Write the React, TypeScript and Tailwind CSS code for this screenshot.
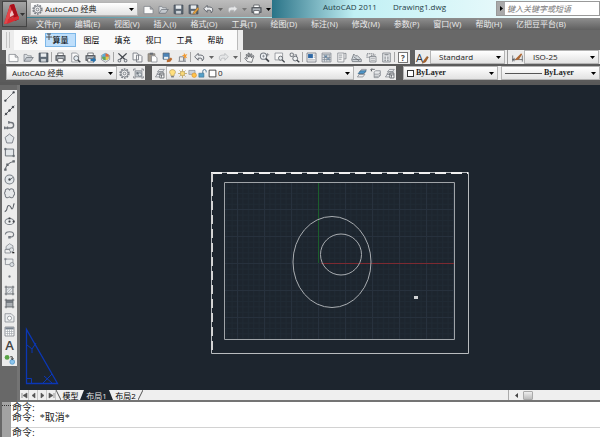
import { useState } from 'react';
import type { ReactNode } from 'react';

const dark = '#43474d';
const mid = '#777c83';

const page = <path d="M1.500 3.500h9l4 4v6.500h-13z M10.500 3.500v4h4" fill="#fbfbfb" stroke={mid} />;
const folder = (
  <>
    <path d="M1.500 13.500v-10h4l1.500 2h5v2.500" fill="#d9dde1" stroke={mid} />
    <path d="M1.500 13.500l3.500-5.500h10l-4 5.500z" fill="#c3c8ce" stroke="#646a72" />
  </>
);
const disk = (
  <>
    <path d="M1.500 1.500h13v13h-12l-1-1z" fill="#5d6874" stroke="#414a54" />
    <path d="M4 2h8v5h-8z" fill="#e8ecef" />
    <path d="M4.500 10h7v4h-7z" fill="#cdd2d7" />
  </>
);
const printer = (
  <>
    <path d="M4 1.500h8v4h-8z" fill="#fff" stroke={dark} />
    <path d="M1.500 5.500h13v6.500h-13z" fill="#aeb3b9" stroke={dark} strokeWidth="1.500" />
    <path d="M4 9.500h8v5h-8z" fill="#fff" stroke={dark} />
  </>
);
const magnifier = (
  <>
    <circle cx="6.500" cy="6" r="4.500" fill="#eef1f4" stroke="#747a82" strokeWidth="1.500" />
    <path d="M10 9.500l4.500 4.500" stroke={dark} strokeWidth="2.500" />
  </>
);
const gear = (
  <>
    <circle cx="8" cy="8" r="6.500" fill="none" stroke={mid} strokeWidth="2" strokeDasharray="2.600 1.500" />
    <circle cx="8" cy="8" r="5" fill="#f1f1f1" stroke={mid} strokeWidth="1.300" />
    <circle cx="8" cy="8" r="2" fill="none" stroke={mid} strokeWidth="1.300" />
  </>
);
const layers = (
  <>
    <path d="M5 5.500l3-3.500h7l-3 3.500z M4 9l3-3.500h7l-3 3.500z M2 13l3-4h8l-3 4z" fill="#e9ebee" stroke={mid} />
  </>
);

const icons: Record<string, ReactNode> = {
  page,
  folder,
  disk,
  printer,
  gear,
  saveAs: (
    <>
      {disk}
      <path d="M8 12l6-7 2 2-6 7-3 1z" fill="#e6a13f" stroke="#8b6630" strokeWidth=".7" />
    </>
  ),
  preview: (
    <>
      <path d="M2.500 1.500h7l3 3v10h-10z" fill="#fafafa" stroke={mid} />
      <circle cx="9" cy="9" r="3.500" fill="#e6edf3" stroke={dark} />
      <path d="M11.500 11.500l3.500 3.500" stroke={dark} strokeWidth="2" />
    </>
  ),
  publish: (
    <>
      {printer}
      <path d="M8 10h4v-3l4 4.500-4 4.500v-3h-4z" fill="#2671ad" />
    </>
  ),
  dwf: (
    <>
      <path d="M2 5l6-3 6 3v6l-6 4-6-4z" fill="#e8eaec" stroke={mid} />
      <circle cx="8" cy="7" r="5" fill="#5ca9d8" />
      <path d="M8 2a5 5 0 0 1 5 5h-5z" fill="#e46b38" />
      <path d="M8 7h5a5 5 0 0 1-5 5z" fill="#ecc84b" />
      <path d="M3 7h5v5a5 5 0 0 1-5-5z" fill="#66a854" />
    </>
  ),
  cut: (
    <>
      <path d="M2 2l9.500 9M14 2l-9.500 9" stroke={dark} strokeWidth="2" />
      <circle cx="3.500" cy="12.500" r="2" fill="none" stroke={mid} strokeWidth="1.500" />
      <circle cx="12.500" cy="12.500" r="2" fill="none" stroke={mid} strokeWidth="1.500" />
    </>
  ),
  copy: <path d="M1.500 1.500h6l2 2v8h-8z M6.500 4.500h6l2 2v8h-8z" fill="#f8f8f8" stroke={mid} strokeWidth="1.300" />,
  paste: (
    <>
      <path d="M1.500 2.500h10v11h-10z" fill="#a39a8d" stroke="#77736d" />
      <path d="M4 1h5v3h-5z" fill="#696f77" />
      <path d="M6.500 5.500h5l3 3v6h-8z" fill="#fff" stroke={mid} />
    </>
  ),
  match: (
    <>
      <path d="M1.500 1.500h9v9h-9z" fill="#4b84b8" stroke="#586572" />
      <path d="M3 7h6v3h-6z" fill="#edf2f5" />
      <path d="M7 12l6-4 2 2-3 4-5 1z" fill="#b86c32" />
    </>
  ),
  block: (
    <>
      <path d="M2 13.500h11M3.500 13v-6h6v6M11.500 8v5" fill="none" stroke={mid} strokeWidth="1.300" />
      <path d="M10 1l2 3 3-1-2 3 2 3-3-1-2 2v-4l-3-1 3-1z" fill="#f29a31" />
    </>
  ),
  undo: <path d="M6 2l-5 5 5 5v-3h4q2 0 2 4 3-3 2-6-1-2.500-4-2.500h-4z" fill="#e9ebed" stroke="#5b6067" strokeWidth="1.300" />,
  redo: <path d="M10 2l5 5-5 5v-3h-4q-2 0-2 4-3-3-2-6 1-2.500 4-2.500h4z" fill="#e5e6e7" stroke="#b0b3b6" />,
  pan: <path d="M5 14l-4-5 1-1 3 2-2-6 1.500-.5 2 4-.5-6h1.500l1.200 6 1.300-5 1.500.5-.5 5.500 2-3.500 1.500 1-2 5-1 4z" fill="#f4f4f4" stroke={dark} />,
  zoom: (
    <>
      {magnifier}
      <path d="M4.500 6h4M6.500 4v4M10 4h5M12.500 1.500v5" stroke={mid} />
    </>
  ),
  zoomWindow: (
    <>
      <path d="M1.500 1.500h11v10h-11z" fill="#f7f7f7" stroke={mid} />
      <circle cx="9.500" cy="9" r="3" fill="#e5e9ec" stroke={dark} />
      <path d="M12 11.500l3.500 3.500" stroke={dark} strokeWidth="2" />
    </>
  ),
  zoomBack: (
    <>
      <circle cx="4" cy="4" r="2.500" fill="#eee" stroke={mid} strokeWidth="1.500" />
      <path d="M8 4h3v3" fill="none" stroke={mid} strokeWidth="1.300" />
      <circle cx="9" cy="9.500" r="3.500" fill="#eef0f1" stroke="#646971" strokeWidth="1.400" />
      <path d="M11.500 12l3.500 3" stroke={dark} strokeWidth="2" />
    </>
  ),
  properties: (
    <>
      <path d="M1.500 1.500h13v13h-13z" fill="#fff" stroke={mid} strokeWidth="1.300" />
      <path d="M3 3h7v6h-7z" fill="#2d67a4" />
      <path d="M3 11.500h10M11 4.500h2.500M11 7.500h2.500" stroke={mid} />
    </>
  ),
  design: (
    <>
      <path d="M1.500 1.500h13v13h-13z" fill="#dfe2e5" stroke={mid} />
      <path d="M2 4h12M5 4v10M8.500 4v10M12 4v10M2 8h12M2 11h12" stroke="#7b8590" />
      <path d="M5.500 5h3v3h-3z M9 9h3v2h-3z" fill="#5f83a4" />
    </>
  ),
  palettes: (
    <>
      <path d="M2.500 1.500h9v13h-9z" fill="#f5f5f5" stroke={mid} />
      <path d="M12 2h2.500v8h-2.500M4 4.500h5M4 7.500h5M4 10.500h4" fill="none" stroke="#6d737a" />
    </>
  ),
  sheets: <path d="M1 11l3-8 3 3 2-1 6 6v3h-13z M4 7l8 6M2 11h12" fill="#d4d9dd" stroke="#5d636a" />,
  markup: (
    <>
      <path d="M1.500 2.500h7v5h-7z" fill="none" stroke={mid} strokeDasharray="2 1" strokeWidth="1.500" />
      <path d="M5.500 6.500h9v8h-9z" fill="#f6f6f6" stroke="#666d74" />
      <path d="M7 9h6M7 12h6M11 2v3l3-1" fill="none" stroke={mid} />
    </>
  ),
  calculator: (
    <>
      <path d="M2.500 1.500h11v13h-11z" fill="#e7e9eb" stroke="#666c73" />
      <path d="M5 4h6M5 7.500h2M9 7.500h2M5 10h2M9 10h2M5 12.500h2M9 12.500h2" stroke="#676d74" strokeWidth="1.300" />
    </>
  ),
  textStyle: <path d="M7 13l6-8 2 1-4 7-5 2z" fill="#ad6428" stroke="#754821" strokeWidth=".7" />,
  dimStyle: (
    <>
      <path d="M1 5v9M15 5v9M1 11h14M1 11l3-2M1 11l3 2" fill="none" stroke={dark} />
      <path d="M5 10l8-8 2 1-5 8-5 1z" fill="#ac6734" />
    </>
  ),
  workspaceSave: (
    <>
      <path d="M3 4h10v9H3z" fill="#c1c6cb" stroke={mid} />
      <path d="M1 4V1.500h3M12 1.500h3V4M1 12v2.500h3M12 14.500h3V12" fill="none" stroke={mid} strokeWidth="1.300" />
      <path d="M5 6h3v3H5z" fill="#70777f" />
      <circle cx="10" cy="9.500" r="2.500" fill="#dfe4e7" stroke="#68717a" />
    </>
  ),
  layers: (
    <>
      {layers}
      <path d="M8.500 7.500h6v7h-6z M8.500 10h6M11 10v4" fill="#fff" stroke={dark} />
    </>
  ),
  layerCurrent: (
    <>
      {layers}
      <path d="M3 8l4-4h8l-4 4z" fill="#4d94c8" stroke="#38678a" />
    </>
  ),
  layerPrevious: (
    <>
      <path d="M6 6l2-2h7v7l-3 3h-6z M6 9h6l3-2M6 12h6l3-2" fill="#e7e9eb" stroke={mid} />
      <path d="M7 2H2v3M1 2.500l2-2M1 2.500l2 2" fill="none" stroke={dark} />
    </>
  ),
  bulb: (
    <>
      <path d="M5 10q-3-3-2-6 1-3 5-3t5 3q1 3-2 6v2h-6z" fill="#ffdf7d" stroke="#a48b50" />
      <path d="M5.500 12.500h5v2.500h-5z" fill="#7a7d81" />
    </>
  ),
  sun: (
    <>
      <path d="M8 0v16M0 8h16M2.500 2.500l11 11M13.500 2.500l-11 11" stroke="#b89d5b" strokeWidth="1.300" />
      <circle cx="8" cy="8" r="4" fill="#f9d877" stroke="#a88d48" />
    </>
  ),
  freeze: (
    <>
      <path d="M1.500 2.500h11v7h-11z" fill="#cbd2d8" stroke="#737a82" />
      <circle cx="11" cy="11" r="4" fill="#ffc34b" stroke="#d58b27" />
    </>
  ),
  unlock: (
    <>
      <path d="M8.500 8v-4q0-3 3-3t3 3v2" fill="none" stroke="#4a7592" strokeWidth="1.700" />
      <path d="M1.500 7.500h9v7h-9z" fill="#549fc8" stroke="#386f8c" />
    </>
  ),
  square: <path d="M2 2h12v12h-12z" fill="#fff" stroke="#333" strokeWidth="1.500" />,
  line: <path d="M2 14L14 2M1 13h2v2h-2zM13 1h2v2h-2z" fill={dark} stroke={dark} />,
  xline: <path d="M1 15L15 1M2 12h2v2h-2zM7 7h2v2h-2zM12 2h2v2h-2z" fill={dark} stroke={dark} strokeWidth="1.200" />,
  polyline: <path d="M1 13h9q4 0 4-4t-4-4H7M1 11v4M5 11v4M7 3v4" fill="none" stroke="#70757b" strokeWidth="2" />,
  polygon: <path d="M8 1.500l6.500 5-2.500 8h-8l-2.500-8z" fill="#e1e5e8" stroke={mid} strokeWidth="1.300" />,
  rectangle: <path d="M2 3h12v10h-12z M1 2h2v2h-2zM13 12h2v2h-2z" fill="#e3e7ea" stroke="#62686f" strokeWidth="1.300" />,
  arc: <path d="M2 14q1-9 12-12M1 13h2v2h-2zM4 6h2v2h-2zM13 1h2v2h-2z" fill="none" stroke="#60656b" strokeWidth="1.500" />,
  circle: (
    <>
      <circle cx="8" cy="8" r="6.500" fill="#e3e7ea" stroke="#777d84" strokeWidth="1.500" />
      <path d="M7 7h2v2h-2zM9 8l4-3" fill={dark} stroke={dark} />
    </>
  ),
  cloud: <path d="M8 3C10 0 15 1 14 5c2 2 2 4 0 6 0 4-4 4-6 2-3 2-7 1-6-3C0 8 1 6 2 5 1 1 6 0 8 3z" fill="#e6e8ea" stroke={mid} strokeWidth="1.500" />,
  spline: <path d="M1 14c5 0 2-9 6-9s3 6 5 5c2-1 1-5 3-8" fill="none" stroke="#5b6067" strokeWidth="1.500" />,
  ellipse: (
    <>
      <ellipse cx="8" cy="8" rx="6.500" ry="4.500" fill="#eceeef" stroke={mid} strokeWidth="1.500" />
      <path d="M7 2.500h2v2h-2zM13 7h2v2h-2zM7 7h2v2h-2z" fill={dark} stroke={dark} strokeWidth=".7" />
    </>
  ),
  ellipseArc: <path d="M2 8q0-4 6-4t6 4-6 4M7 11h2v2h-2z" fill="none" stroke={mid} strokeWidth="1.700" />,
  insert: (
    <>
      <path d="M3 5l5-4 5 3v5H3z" fill="#e0e4e7" stroke={mid} />
      <path d="M1.500 9.500h8v5h-8z" fill="#f0f0f0" stroke="#6c7279" />
      <circle cx="11" cy="10" r="3" fill="#e0e3e5" stroke={mid} />
      <path d="M12 13h3v2h-3z" fill="#222" />
    </>
  ),
  makeBlock: (
    <>
      <path d="M2 3h11v8h-11z M1 2h2v2h-2z" fill="#eceeef" stroke="#747a81" />
      <circle cx="11.500" cy="11" r="3" fill="#d9dfe4" stroke={mid} />
    </>
  ),
  point: <path d="M7 7h2v2h-2z" fill={mid} stroke={mid} />,
  hatch: (
    <>
      <path d="M3 3h10v10h-10z" fill="#e1e4e7" />
      <path d="M3 1v14M13 1v14M1 3h14M1 13h14" fill="none" stroke="#5f646a" strokeWidth="1.300" />
      <path d="M4 8l4-4M4 12l8-8M8 12l4-4" fill="none" stroke="#a0a5aa" />
    </>
  ),
  gradient: (
    <>
      <path d="M3 3h10v5h-10z" fill="#777d84" />
      <path d="M3 8h10v5h-10z" fill="#a9aeb3" />
      <path d="M3 1v14M13 1v14M1 3h14M1 13h14" fill="none" stroke="#5f646a" strokeWidth="1.300" />
    </>
  ),
  region: (
    <>
      <path d="M1.500 2.500h9l4 4v8h-13z" fill="#eaecee" stroke={mid} />
      <circle cx="8" cy="9" r="3" fill="#fff" stroke={mid} />
    </>
  ),
  table: (
    <>
      <path d="M1.500 1.500h13v13h-13z" fill="#fff" stroke="#666c73" />
      <path d="M2 2h12v3h-12z" fill="#79838f" />
      <path d="M2 8h12M2 11h12M5 5v9M8 5v9M11 5v9" stroke="#a3a9af" />
    </>
  ),
  addSelected: (
    <>
      <circle cx="4.500" cy="5" r="3.500" fill="#59a447" />
      <circle cx="12" cy="11.500" r="3.500" fill="#8bc4ed" stroke="#4a91c3" />
      <path d="M9 4h3v4l-2-1.500M12 8l2-1.500" fill="none" stroke="#333" strokeWidth="1.300" />
    </>
  ),
};

function Icon({ name }: { name: string }) {
  return (
    <svg viewBox="0 0 16 16" className="size-[11px] shrink-0" aria-hidden="true">
      {icons[name]}
    </svg>
  );
}

function Caret({ className = 'text-black' }: { className?: string }) {
  return (
    <svg viewBox="0 0 5 3" className={`h-[3px] w-[5px] shrink-0 ${className}`} aria-hidden="true">
      <path d="M0 0h5L2.500 3z" fill="currentColor" />
    </svg>
  );
}

function ToolButton({ name, children }: { name: string; children?: ReactNode }) {
  return (
    <button type="button" aria-label={name} className="flex w-[14px] shrink-0 items-center justify-center">
      {children ?? <Icon name={name} />}
    </button>
  );
}

type PickerProps = { label: string; options: string[]; className?: string; textClass?: string; children?: ReactNode };

function Picker({ label, options, className = '', textClass = 'pl-[5px]', children }: PickerProps) {
  return (
    <label className={`relative flex h-[14px] items-center border border-[#b4b4b4] bg-[#f1f1f1] bg-linear-to-b from-white to-[#e2e2e2] text-[8px] ${className}`}>
      {children}
      <select aria-label={label} className={`h-[12px] min-w-0 flex-1 appearance-none bg-transparent leading-[12px] text-[#222] outline-none ${textClass}`}>
        {options.map((o) => (
          <option key={o}>{o}</option>
        ))}
      </select>
      <span className="pointer-events-none absolute right-[3px] flex">
        <Caret />
      </span>
    </label>
  );
}

const menus = ['文件(F)', '编辑(E)', '视图(V)', '插入(I)', '格式(O)', '工具(T)', '绘图(D)', '标注(N)', '修改(M)', '参数(P)', '窗口(W)', '帮助(H)', '亿把豆平台(B)'];
const plugins = ['图块', '算量', '图层', '填充', '视口', '工具', '帮助'];
const standard = [
  'page', 'folder', 'disk', '|', 'printer', 'preview', 'publish', 'dwf', '|', 'cut', 'copy', 'paste', 'match', 'block', '|',
  'undo', 'v', 'redo', 'v', '|', 'pan', 'zoom', 'zoomWindow', 'zoomBack', '|',
  'properties', 'design', 'palettes', 'sheets', 'markup', 'calculator', '|', '?',
];
const drawTools = [
  'line', 'xline', 'polyline', 'polygon', 'rectangle', 'arc', 'circle', 'cloud', 'spline', 'ellipse',
  'ellipseArc', 'insert', 'makeBlock', 'point', 'hatch', 'gradient', 'region', 'table', 'A', 'addSelected',
];

function TitleBar() {
  return (
    <header className="flex h-[30px] bg-[#606060]">
      <button type="button" aria-label="应用程序菜单" className="mt-px ml-[2px] flex h-[26px] w-[25px] shrink-0 items-center border border-[#444] bg-linear-to-b from-[#a5a5a5] to-[#6b6b6b]">
        <svg viewBox="0 0 17 23" className="h-[23px] w-[17px]" aria-hidden="true">
          <path d="M1 21L7 2l4-1 5 15-4 2-2-4-4 2-1 4z" fill="#c91f27" />
          <path d="M1 21L7 2l2 5-4 13z" fill="#e4464a" />
          <path d="M7 2l4-1 5 15-4 2z" fill="#a90f1a" />
          <path d="M7 11l2-4 2 5-4 2z" fill="#f0c3c3" />
          <path d="M5 16l11-3v3l-12 5z" fill="#d92c32" />
        </svg>
        <Caret className="text-[#333]" />
      </button>
      <div className="flex min-w-0 flex-1 flex-col">
        <div className="flex h-[18px] bg-linear-to-r from-[#3b8192] via-[#c5f4f6] to-white">
          <div className="flex h-[17px] w-[245px] shrink-0 items-center bg-linear-to-b from-[#bdbdbd] to-[#9d9d9d] pt-px pl-[3px]">
            <Picker label="工作空间" options={['AutoCAD 经典']} className="mr-[3px] w-[113px] pl-px" textClass="pl-[2px]">
              <Icon name="gear" />
            </Picker>
            <div className="flex items-center gap-px">
              <ToolButton name="page" />
              <ToolButton name="folder" />
              <ToolButton name="disk" />
              <ToolButton name="saveAs" />
              <ToolButton name="undo" />
              <span className="flex w-[8px] justify-center"><Caret className="text-[#666]" /></span>
              <ToolButton name="redo" />
              <span className="flex w-[8px] justify-center"><Caret className="text-[#777]" /></span>
              <ToolButton name="printer" />
              <span className="flex w-[8px] justify-center"><Caret /></span>
            </div>
          </div>
          <div className="flex min-w-0 flex-1 bg-linear-to-r from-[#287488] from-0% via-[#c0f0f4] via-25% to-white">
            <h1 className="flex flex-1 gap-4 pl-[51px] text-[8px] leading-[13px] whitespace-nowrap text-[#1f3d46]">
              <span>AutoCAD 2011</span>
              <span>Drawing1.dwg</span>
            </h1>
            <div className="mt-px flex h-[15px] w-[104px] shrink-0 border border-[#999] bg-white">
              <button type="button" aria-label="展开搜索" className="flex w-[8px] items-center justify-center bg-[#a9a9a9]">
                <svg viewBox="0 0 3 5" className="h-[5px] w-[3px]" aria-hidden="true"><path d="M0 0l3 2.500L0 5z" /></svg>
              </button>
              <input aria-label="搜索" placeholder="键入关键字或短语" className="w-[94px] pl-[2px] text-[8px] italic outline-none placeholder:text-[#777]" />
            </div>
          </div>
        </div>
        <nav className="flex h-[12px] items-center gap-[14px] bg-linear-to-b from-[#8e8e8e] to-[#606060] pl-[9px] text-[8px] leading-[10px] whitespace-nowrap text-[#ececec]">
          {menus.map((m) => (
            <button type="button" key={m}>{m}</button>
          ))}
        </nav>
      </div>
    </header>
  );
}

function PluginBar() {
  const [active, setActive] = useState('算量');
  return (
    <div className="flex h-[20px] bg-[#686868] pl-[2px]">
      <div className="flex w-[12px] items-center justify-center gap-[2px] bg-[#ececec]">
        <span className="h-[16px] w-px bg-[#c4c4c4]" />
        <span className="h-[16px] w-px bg-[#c4c4c4]" />
      </div>
      <div className="relative flex items-center bg-[#fbfbfb] pr-[6px]">
        {plugins.map((p) => (
          <button
            type="button"
            key={p}
            onClick={() => setActive(p)}
            className={`h-[14px] w-[31px] border text-[8px] leading-[12px] text-black ${active === p ? 'border-[#7cb7e8] bg-[#bfdffb]' : 'border-transparent'}`}
          >
            {p}
          </button>
        ))}
        <svg viewBox="0 0 6 8" className="absolute top-[3px] left-[32px] h-[8px] w-[6px]" aria-hidden="true">
          <path d="M1 1h4M3 1v6M0 4h6" stroke="#555" fill="none" />
        </svg>
      </div>
      <div className="w-[6px] border-l border-[#bbb] bg-[#ededed]" />
    </div>
  );
}

function StandardBar() {
  return (
    <div className="flex h-[14px] gap-[5px] bg-[#606060] pl-[6px]">
      <div className="flex shrink-0 items-center gap-px bg-[#ececec]">
        {standard.map((t, i) => {
          if (t === '|') return <span key={i} className="h-[10px] w-px bg-[#a5a5a5]" />;
          if (t === 'v') return <span key={i} className="flex w-[8px] justify-center"><Caret className="text-[#666]" /></span>;
          if (t === '?')
            return (
              <ToolButton key={i} name="帮助">
                <span className="w-[10px] border border-[#777] bg-white text-[8px] leading-[9px] font-bold text-[#444]">?</span>
              </ToolButton>
            );
          return <ToolButton key={i} name={t} />;
        })}
      </div>
      <div className="flex min-w-0 flex-1 items-center bg-[#ececec] pl-px">
        <button type="button" aria-label="文字样式" className="relative mr-px w-[13px] shrink-0 text-left text-[11px] leading-[13px] text-[#333]">
          A
          <span className="absolute top-[2px] right-0"><Icon name="textStyle" /></span>
        </button>
        <Picker label="文字样式" options={['Standard']} className="w-[75px] shrink-0" textClass="pl-[8px]" />
        <span className="mx-[2px] h-full w-px bg-[#999]" />
        <ToolButton name="dimStyle" />
        <Picker label="标注样式" options={['ISO-25']} className="w-[75px] shrink-0" textClass="pl-[8px]" />
      </div>
    </div>
  );
}

function LayerBar() {
  return (
    <div className="flex h-[21px] items-center gap-[7px] border-b-[3px] border-[#595959] bg-[#5b5b5b] pl-[6px]">
      <div className="flex h-[14px] shrink-0 items-center bg-[#ececec]">
        <Picker label="工作空间" options={['AutoCAD 经典']} className="w-[111px]" />
        <ToolButton name="gear" />
        <ToolButton name="workspaceSave" />
      </div>
      <div className="flex h-[14px] shrink-0 items-center bg-[#ececec]">
        <ToolButton name="layers" />
        <Picker label="图层" options={['0']} className="w-[188px]" textClass="pl-px">
          <span className="flex">
            {['bulb', 'sun', 'freeze', 'unlock', 'square'].map((n) => (
              <svg key={n} viewBox="0 0 16 16" className="ml-px size-[9px]" aria-hidden="true">{icons[n]}</svg>
            ))}
          </span>
        </Picker>
        <ToolButton name="layerCurrent" />
        <ToolButton name="layerPrevious" />
        <ToolButton name="layers" />
      </div>
      <div className="flex h-[14px] min-w-0 flex-1 items-center gap-[3px] bg-[#ececec] font-['Liberation_Serif',serif] font-bold">
        <Picker label="颜色" options={['ByLayer']} className="w-[95px] shrink-0 pl-[3px]" textClass="pl-[2px]">
          <span className="size-[7px] border border-[#333] bg-white" />
        </Picker>
        <Picker label="线型" options={['ByLayer']} className="flex-1 pl-[3px]" textClass="pl-[2px]">
          <span className="h-px w-[37px] bg-[#555]" />
        </Picker>
      </div>
    </div>
  );
}

// Layout sheet with its viewport, plus the paper space UCS icon
function Drawing() {
  return (
    <svg viewBox="0 0 580 305" className="block h-full w-full" fill="none" role="img" aria-label="布局1">
      <defs>
        <pattern id="minor" x="1" y="0" width="5.400" height="5.400" patternUnits="userSpaceOnUse">
          <path d="M.5 0v5.400M0 .5h5.400" stroke="#202a34" />
        </pattern>
        <pattern id="major" x="1" y="16" width="27" height="27" patternUnits="userSpaceOnUse">
          <path d="M.5 0v27M0 .5h27" stroke="#27313d" />
        </pattern>
      </defs>
      <path d="M204.500 97.500h230v157h-230z" fill="url(#minor)" />
      <path d="M204.500 97.500h230v157h-230z" fill="url(#major)" />
      <path d="M298.500 98v80" stroke="#1b5e2c" />
      <path d="M301 178.500h133" stroke="#7c2a31" />
      <path d="M204.500 97.500h230v157h-230z" stroke="#a0a4a8" />
      <path d="M191.500 87.500h257v181h-257z" stroke="#b9bcbf" />
      <path d="M191 88h257" stroke="#f0f0f0" strokeWidth="2" strokeDasharray="11 5" />
      <path d="M192 88v181" stroke="#d4d4d4" strokeWidth="2" strokeDasharray="9 5" />
      <ellipse cx="312" cy="177" rx="39" ry="45.500" stroke="#a9adb1" />
      <circle cx="321" cy="169.500" r="20.500" stroke="#a9adb1" />
      <path d="M394 211h4v3h-4z" fill="#d0d2d4" />
      <g stroke="#0b37b5">
        <path d="M6.500 244.500v54h31z" strokeWidth="1.300" />
        <path d="M6.500 293.500h5v5M7 260l5 4 4-6M12 264v4M24 291l8 7M23 298l9-9" />
      </g>
    </svg>
  );
}

function LayoutTabs() {
  const nav = ['M1 1v5M6 1v5L2 3.500z', 'M5 1v5L2 3.500z', 'M2 1v5l3-2.500z', 'M6 1v5M1 1v5l4-2.500z'];
  const navNames = ['第一个', '上一个', '下一个', '最后一个'];
  return (
    <div className="flex h-[10px] shrink-0 items-stretch bg-[#efefef] text-[8px] leading-[9px]">
      {nav.map((d, i) => (
        <button type="button" key={d} aria-label={navNames[i]} className="flex w-[9px] items-center justify-center border-r border-[#c8c8c8]">
          <svg viewBox="0 0 7 7" className="size-[7px]" aria-hidden="true"><path d={d} fill="#555" stroke="#555" strokeWidth=".6" /></svg>
        </button>
      ))}
      <svg viewBox="0 0 5 10" className="h-[10px] w-[5px]" aria-hidden="true"><path d="M0 0l5 10" stroke="#555" /></svg>
      <button type="button" className="w-[19px] text-black">模型</button>
      <button type="button" className="w-[33px] bg-[#1d252e] text-[#e4e4e4] [clip-path:polygon(4px_0,calc(100%-4px)_0,100%_100%,0_100%)]">布局1</button>
      <button type="button" className="w-[25px] text-black">布局2</button>
      <svg viewBox="0 0 5 10" className="h-[10px] w-[5px]" aria-hidden="true"><path d="M5 0L0 10" stroke="#555" /></svg>
      <div className="flex-1" />
      <div className="flex w-[92px] items-center gap-[5px] border-l border-[#aaa] pl-[6px]">
        <svg viewBox="0 0 3 5" className="h-[5px] w-[3px]" aria-hidden="true"><path d="M3 0L0 2.500 3 5z" fill="#444" /></svg>
        <span className="h-[9px] w-[10px] rounded-[1px] border border-[#aaa] bg-linear-to-b from-[#eee] to-[#bcbcbc]" />
      </div>
    </div>
  );
}

function CommandLine() {
  return (
    <footer className="flex h-[35px] shrink-0 overflow-hidden bg-[#676767] pl-[2px] font-['Liberation_Serif','Noto_Sans_CJK_SC',serif] text-[10px] leading-[10px] text-[#222]">
      <div className="w-[9px] bg-[#a2a2a2] pt-[3px]">
        <div className="h-[2px] border-t border-dotted border-[#333]" />
      </div>
      <div className="min-w-0 flex-1 bg-white">
        <div className="h-[26px] border-b border-[#d2d2d2] pt-px pl-px whitespace-pre">
          <p>命令:</p>
          <p>命令:  *取消*</p>
        </div>
        <label className="flex pl-px whitespace-nowrap">
          命令:
          <input className="min-w-0 flex-1 bg-transparent pl-1 outline-none" />
        </label>
      </div>
    </footer>
  );
}

export default function App() {
  return (
    <div className="flex h-screen flex-col overflow-hidden bg-[#686868] font-['Open_Sans','Noto_Sans_CJK_SC',sans-serif]">
      <TitleBar />
      <PluginBar />
      <StandardBar />
      <LayerBar />
      <main className="flex min-h-0 flex-1 pl-[2px]">
        <div className="w-[15px] shrink-0 pt-[5px]">
          <div className="flex h-[276px] flex-col bg-[#ececec]">
            {drawTools.map((t) => (
              <button type="button" key={t} aria-label={t} className="flex flex-1 items-center justify-center">
                {t === 'A' ? <span className="text-[13px] leading-[13px] font-semibold text-[#444]">A</span> : <Icon name={t} />}
              </button>
            ))}
          </div>
        </div>
        <div className="flex min-w-0 flex-1 flex-col border-b-2 border-l-[3px] border-[#747474]">
          <div className="min-h-0 flex-1 bg-[#1d252e]">
            <Drawing />
          </div>
          <LayoutTabs />
        </div>
      </main>
      <CommandLine />
    </div>
  );
}
